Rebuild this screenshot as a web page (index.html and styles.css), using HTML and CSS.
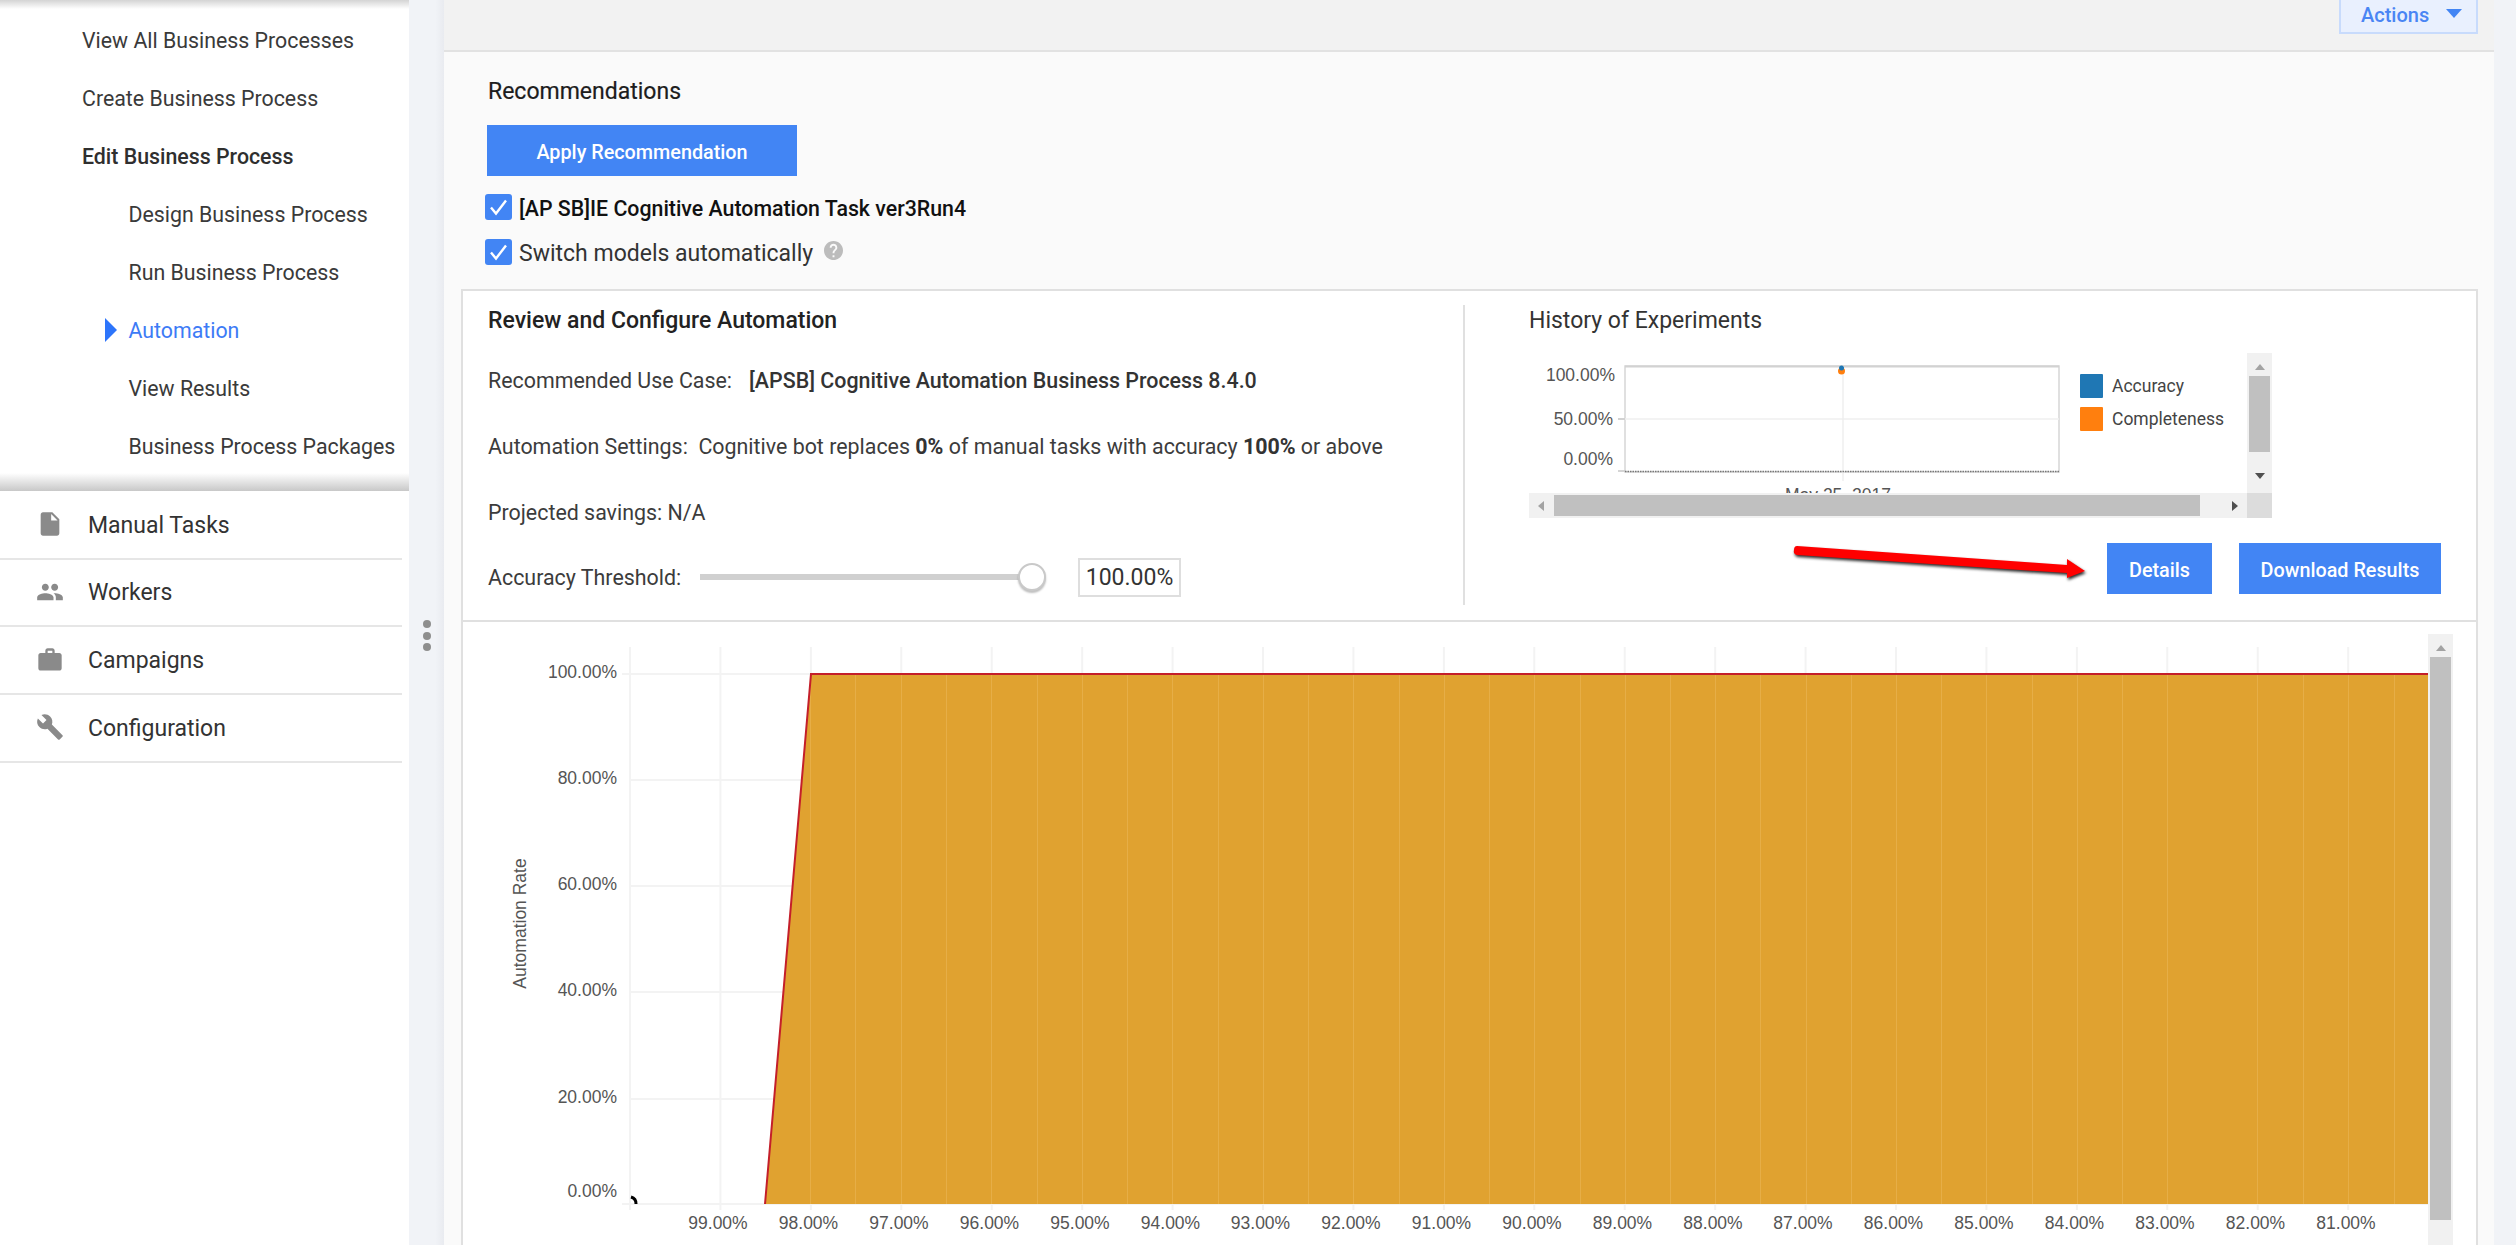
FILE: index.html
```html
<!DOCTYPE html>
<html lang="en">
<head>
<meta charset="utf-8">
<title>Automation</title>
<link rel="stylesheet" href="styles.css">
</head>
<body>
<aside class="sidebar">
  <ul class="submenu">
    <li class="sub-item">View All Business Processes</li>
    <li class="sub-item">Create Business Process</li>
    <li class="sub-item sub-current">Edit Business Process</li>
    <li class="sub-item sub-nested">Design Business Process</li>
    <li class="sub-item sub-nested">Run Business Process</li>
    <li class="sub-item sub-nested sub-active">Automation</li>
    <li class="sub-item sub-nested">View Results</li>
    <li class="sub-item sub-nested">Business Process Packages</li>
  </ul>
  <ul class="mainmenu">
    <li class="main-item"><svg class="main-icon" viewBox="0 0 24 24"><path d="M6 2c-1.1 0-1.99.9-1.99 2L4 20c0 1.1.89 2 1.99 2H18c1.1 0 2-.9 2-2V8l-6-6H6zm7 7V3.5L18.5 9H13z"/></svg>Manual Tasks</li>
    <li class="main-item"><svg class="main-icon" viewBox="0 0 24 24"><path d="M16 11c1.66 0 2.99-1.34 2.99-3S17.66 5 16 5c-1.66 0-3 1.34-3 3s1.34 3 3 3zm-8 0c1.66 0 2.99-1.34 2.99-3S9.66 5 8 5C6.34 5 5 6.34 5 8s1.34 3 3 3zm0 2c-2.33 0-7 1.17-7 3.5V19h14v-2.5c0-2.33-4.67-3.5-7-3.5zm8 0c-.29 0-.62.02-.97.05 1.16.84 1.97 1.97 1.97 3.45V19h6v-2.5c0-2.33-4.67-3.5-7-3.5z"/></svg>Workers</li>
    <li class="main-item"><svg class="main-icon" viewBox="0 0 24 24"><path d="M20 6h-4V4c0-1.11-.89-2-2-2h-4c-1.11 0-2 .89-2 2v2H4c-1.11 0-1.99.89-1.99 2L2 19c0 1.11.89 2 2 2h16c1.11 0 2-.89 2-2V8c0-1.11-.89-2-2-2zm-6 0h-4V4h4v2z"/></svg>Campaigns</li>
    <li class="main-item"><svg class="main-icon" viewBox="0 0 24 24"><path d="M22.7 19l-9.1-9.1c.9-2.3.4-5-1.5-6.9-2-2-5-2.4-7.4-1.3L9 6 6 9 1.6 4.7C.4 7.1.9 10.1 2.9 12.1c1.9 1.9 4.6 2.4 6.9 1.5l9.1 9.1c.4.4 1 .4 1.4 0l2.3-2.3c.5-.4.5-1.1.1-1.4z"/></svg>Configuration</li>
  </ul>
</aside>
<div class="gutter"><span class="dot"></span><span class="dot"></span><span class="dot"></span></div>
<main class="main">
  <header class="topbar">
    <div class="actions">Actions<span class="caret"></span></div>
  </header>
  <section class="recs">
    <h2 class="recs-title">Recommendations</h2>
    <button class="btn btn-apply">Apply Recommendation</button>
    <div class="check-row check-first">
      <span class="check"><svg viewBox="0 0 27 26"><path d="M6 13.5l5 6L21 6.5" fill="none" stroke="#fff" stroke-width="2.4"/></svg></span>
      <span class="check-label check-strong">[AP SB]IE Cognitive Automation Task ver3Run4</span>
    </div>
    <div class="check-row">
      <span class="check"><svg viewBox="0 0 27 26"><path d="M6 13.5l5 6L21 6.5" fill="none" stroke="#fff" stroke-width="2.4"/></svg></span>
      <span class="check-label">Switch models automatically</span>
      <svg class="help" viewBox="2 2 20 20"><path d="M12 2C6.48 2 2 6.48 2 12s4.48 10 10 10 10-4.48 10-10S17.52 2 12 2zm1 17h-2v-2h2v2zm2.07-7.75l-.9.92C13.45 12.9 13 13.5 13 15h-2v-.5c0-1.1.45-2.1 1.17-2.83l1.24-1.26c.37-.36.59-.86.59-1.41 0-1.1-.9-2-2-2s-2 .9-2 2H8c0-2.21 1.79-4 4-4s4 1.79 4 4c0 .88-.36 1.68-.93 2.25z"/></svg>
    </div>
  </section>
  <section class="card">
    <div class="card-top">
      <div class="review">
        <h3 class="review-title">Review and Configure Automation</h3>
        <div class="review-row">Recommended Use Case:<span class="use-case">[APSB] Cognitive Automation Business Process 8.4.0</span></div>
        <div class="review-row">Automation Settings:&nbsp; Cognitive bot replaces&nbsp;<b>0%</b>&nbsp;of manual tasks with accuracy&nbsp;<b>100%</b>&nbsp;or above</div>
        <div class="review-row">Projected savings: N/A</div>
        <div class="review-row slider-row">
          <span class="slider-label">Accuracy Threshold:</span>
          <span class="slider-track"></span>
          <span class="slider-knob"></span>
          <span class="slider-value">100.00%</span>
        </div>
      </div>
      <div class="history">
        <h3 class="history-title">History of Experiments</h3>
        <div class="history-frame">
          <svg class="history-chart" viewBox="1528 353 718 140">
            <rect x="1624" y="366" width="434" height="106" fill="#fff" stroke="#d6d6d6" stroke-width="1.5"/>
            <path d="M1624 366.500H2058" stroke="#d2d2d2" stroke-width="2"/>
            <path d="M1617 419H2058M1842 366V481" stroke="#efefef" stroke-width="1.500"/>
            <path d="M1617 419H1624M1617 471H1624" stroke="#c8c8c8" stroke-width="1.500"/>
            <path d="M1624 471.500H2058" stroke="#777" stroke-width="1.500" stroke-dasharray="1.500 1"/>
            <circle cx="1840.500" cy="371" r="3.500" fill="#ff7f0e"/>
            <circle cx="1840.500" cy="368" r="2.500" fill="#1f77b4"/>
            <text class="tick" x="1614" y="381" text-anchor="end">100.00%</text>
            <text class="tick" x="1612" y="425" text-anchor="end">50.00%</text>
            <text class="tick" x="1612" y="465" text-anchor="end">0.00%</text>
            <text class="tick" x="1837" y="501" text-anchor="middle">May 25, 2017</text>
            <rect x="2079" y="374" width="23" height="24" rx="1" fill="#1f77b4"/>
            <rect x="2079" y="407" width="23" height="24" rx="1" fill="#ff7f0e"/>
            <text class="legend" x="2111" y="392">Accuracy</text>
            <text class="legend" x="2111" y="425">Completeness</text>
          </svg>
          <div class="vbar vbar-small">
            <span class="arrow-up"></span>
            <span class="vthumb vthumb-small"></span>
            <span class="arrow-down"></span>
          </div>
          <div class="hbar">
            <span class="arrow-left"></span>
            <span class="hthumb"></span>
            <span class="arrow-right"></span>
          </div>
          <div class="corner"></div>
        </div>
        <div class="history-actions">
          <button class="btn btn-details">Details</button>
          <button class="btn btn-download">Download Results</button>
        </div>
      </div>
    </div>
    <div class="card-chart">
      <svg class="rate-chart" viewBox="463 622 1965 623">
        <path class="grid" d="M622 674H2428M630 780H2428M630 886H2428M630 992H2428M630 1099H2428M622 1204H2428"/>
        <path class="grid" d="M630 647V1210M720.400 647V1210M810.900 647V1210M901.300 647V1210M991.700 647V1210M1082.200 647V1210M1172.600 647V1210M1263 647V1210M1353.400 647V1210M1443.900 647V1210M1534.300 647V1210M1624.700 647V1210M1715.200 647V1210M1805.600 647V1210M1896 647V1210M1986.400 647V1210M2076.900 647V1210M2167.300 647V1210M2257.700 647V1210M2348.200 647V1210"/>
        <path d="M765 1204L811 674H2428V1204Z" fill="#e0a230"/>
        <path class="band" d="M810.500 675V1204M855.500 675V1204M901.500 675V1204M946.500 675V1204M991.500 675V1204M1037.500 675V1204M1082.500 675V1204M1127.500 675V1204M1172.500 675V1204M1218.500 675V1204M1263.500 675V1204M1308.500 675V1204M1353.500 675V1204M1399.500 675V1204M1444.500 675V1204M1489.500 675V1204M1534.500 675V1204M1580.500 675V1204M1625.500 675V1204M1670.500 675V1204M1715.500 675V1204M1760.500 675V1204M1806.500 675V1204M1851.500 675V1204M1896.500 675V1204M1941.500 675V1204M1986.500 675V1204M2032.500 675V1204M2077.500 675V1204M2122.500 675V1204M2167.500 675V1204M2257.500 675V1204M2303.500 675V1204M2348.500 675V1204M2394.500 675V1204"/>
        <path d="M765 1204L811 674H2428" fill="none" stroke="#c41f2a" stroke-width="2"/>
        <path d="M631 1197A7 7 0 0 1 636 1204" fill="none" stroke="#000" stroke-width="3"/>
        <text class="tick" x="617" y="678" text-anchor="end">100.00%</text>
        <text class="tick" x="617" y="784" text-anchor="end">80.00%</text>
        <text class="tick" x="617" y="890" text-anchor="end">60.00%</text>
        <text class="tick" x="617" y="996" text-anchor="end">40.00%</text>
        <text class="tick" x="617" y="1103" text-anchor="end">20.00%</text>
        <text class="tick" x="617" y="1197" text-anchor="end">0.00%</text>
        <text class="tick" x="718" y="1229" text-anchor="middle">99.00%</text>
        <text class="tick" x="808.500" y="1229" text-anchor="middle">98.00%</text>
        <text class="tick" x="899" y="1229" text-anchor="middle">97.00%</text>
        <text class="tick" x="989.500" y="1229" text-anchor="middle">96.00%</text>
        <text class="tick" x="1080" y="1229" text-anchor="middle">95.00%</text>
        <text class="tick" x="1170.500" y="1229" text-anchor="middle">94.00%</text>
        <text class="tick" x="1260.500" y="1229" text-anchor="middle">93.00%</text>
        <text class="tick" x="1351" y="1229" text-anchor="middle">92.00%</text>
        <text class="tick" x="1441.500" y="1229" text-anchor="middle">91.00%</text>
        <text class="tick" x="1532" y="1229" text-anchor="middle">90.00%</text>
        <text class="tick" x="1622.500" y="1229" text-anchor="middle">89.00%</text>
        <text class="tick" x="1713" y="1229" text-anchor="middle">88.00%</text>
        <text class="tick" x="1803" y="1229" text-anchor="middle">87.00%</text>
        <text class="tick" x="1893.500" y="1229" text-anchor="middle">86.00%</text>
        <text class="tick" x="1984" y="1229" text-anchor="middle">85.00%</text>
        <text class="tick" x="2074.500" y="1229" text-anchor="middle">84.00%</text>
        <text class="tick" x="2165" y="1229" text-anchor="middle">83.00%</text>
        <text class="tick" x="2255.500" y="1229" text-anchor="middle">82.00%</text>
        <text class="tick" x="2346" y="1229" text-anchor="middle">81.00%</text>
        <text class="tick axis-title" transform="translate(526 923.500) rotate(-90)" text-anchor="middle">Automation Rate</text>
      </svg>
      <div class="vbar vbar-large">
        <span class="arrow-up"></span>
        <span class="vthumb vthumb-large"></span>
      </div>
    </div>
  </section>
</main>
<div class="edge"></div>
<svg class="callout" viewBox="1785 540 310 50">
  <path d="M1797 546L2067 565V559L2085 571L2067 578V573L1797 555Q1793 554 1794 550Q1794 546 1797 546Z" fill="#f00"/>
</svg>
</body>
</html>
```
FILE: styles.css
```css
* { box-sizing: border-box; }
html, body { margin: 0; height: 100%; }
body {
  position: relative;
  display: flex;
  height: 1245px;
  overflow: hidden;
  background: #f1f3f7;
  color: #333;
  font-family: Roboto, "Liberation Sans", sans-serif;
}
ul { list-style: none; margin: 0; padding: 0; }
h2, h3 { margin: 0; font-weight: 500; }

.sidebar { width: 409px; flex: none; height: 100%; background: #fff; }
.submenu {
  padding: 11px 0 16px;
  background:
    linear-gradient(#d4d4d4, rgba(255,255,255,0)) top / 100% 9px no-repeat,
    linear-gradient(rgba(255,255,255,0), #c8c8c8) bottom / 100% 18px no-repeat;
}
.sub-item {
  position: relative;
  height: 58px;
  padding: 1px 0 0 82px;
  font-size: 21.330px;
  line-height: 58px;
  color: #3a3a3a;
  white-space: nowrap;
}
.sub-current { font-weight: 500; color: #2f2f2f; }
.sub-nested { padding-left: 128.500px; }
.sub-active { color: #3d7bf6; }
.sub-active::before {
  content: "";
  position: absolute;
  left: 105px;
  top: 17px;
  border-left: 12px solid #2d75fb;
  border-top: 12px solid transparent;
  border-bottom: 12px solid transparent;
}
.mainmenu { width: 402px; padding-top: 1px; }
.main-item {
  display: flex;
  align-items: center;
  height: 67.67px;
  padding: 1px 0 0 36px;
  border-bottom: 2px solid #e6e6e6;
  font-size: 23px;
  color: #333;
}
.main-icon { width: 28px; height: 28px; margin: -2px 24px 0 0; fill: #8a8a8a; }

.gutter {
  width: 35px;
  flex: none;
  display: flex;
  flex-direction: column;
  align-items: center;
  gap: 3.500px;
  padding-top: 620px;
  background: linear-gradient(90deg, #f1f3f7 75%, #e9ebf0);
}
.dot { width: 8px; height: 8px; border-radius: 50%; background: #8e8e8e; }

.main { width: 2050px; flex: none; height: 100%; background: #fafafa; }
.edge { flex: 1; }
.topbar {
  display: flex;
  justify-content: flex-end;
  height: 52px;
  padding-right: 16px;
  background: #f2f2f2;
  border-bottom: 2px solid #e2e2e2;
}
.actions {
  display: flex;
  align-items: center;
  width: 139px;
  height: 34px;
  padding: 0 0 2px 20px;
  background: #e9f0fe;
  border: 2px solid #c8dbfc;
  border-top: 0;
  color: #4a85f4;
  font-size: 20px;
  font-weight: 500;
}
.caret {
  margin: -3px 0 0 17px;
  border-top: 9px solid #4285f4;
  border-left: 8px solid transparent;
  border-right: 8px solid transparent;
}

.recs { padding: 24px 0 0 41px; }
.recs-title { margin-left: 3px; padding-top: 1px; height: 30px; font-size: 23px; line-height: 30px; font-weight: 400; color: #1d1d1d; -webkit-text-stroke: .2px #1d1d1d; }
.btn {
  display: block;
  height: 51px;
  padding: 4px 0 0;
  border: 0;
  background: #4285f4;
  color: #fff;
  font-family: inherit;
  font-size: 19.800px;
  font-weight: 500;
}
.btn-apply { width: 310px; margin: 19px 0 0 2px; }
.check-row { display: flex; align-items: center; height: 27px; margin-top: 18px; }
.check-first { height: 26px; }
.check { width: 27px; height: 26px; flex: none; border-radius: 3px; background: #4285f4; }
.check svg { display: block; width: 27px; height: 26px; }
.check-label { margin-left: 7px; padding-top: 3px; font-size: 23px; color: #333; }
.check-strong { font-size: 21.330px; font-weight: 500; color: #111; }
.help { width: 19px; height: 19px; margin: -2px 0 0 11px; fill: #bcbcbc; }

.card {
  margin: 24px 16px 0 17px;
  height: 1000px;
  background: #fff;
  border: 2px solid #e0e0e0;
  border-bottom: 0;
}
.card-top {
  display: flex;
  height: 331px;
  padding-top: 14px;
  border-bottom: 2px solid #e0e0e0;
}
.review { width: 1002px; height: 300px; padding-left: 25px; border-right: 2px solid #e0e0e0; }
.review-title { height: 30px; padding-top: 1px; font-size: 23px; line-height: 30px; margin-bottom: 12px; color: #222; }
.review-row { display: flex; align-items: center; height: 66px; font-size: 21.400px; color: #3c3c3c; white-space: nowrap; }
.review-row b { font-weight: 700; color: #333; }
.use-case { margin-left: 17px; font-weight: 500; color: #333; }
.slider-row { height: 60px; padding-top: 4px; }
.slider-label { width: 212px; flex: none; }
.slider-track { width: 320px; height: 6px; background: #d0d0d0; }
.slider-knob {
  width: 28px;
  height: 28px;
  margin-left: -2px;
  border-radius: 50%;
  background: #fff;
  border: 2px solid #c9c9c9;
  box-shadow: 0 2px 2px rgba(0,0,0,.25);
}
.slider-value {
  width: 103px;
  height: 39px;
  margin-left: 32px;
  border: 2px solid #dedede;
  font-size: 23px;
  line-height: 35px;
  text-align: center;
  color: #333;
}

.history { flex: 1; padding: 0 35px 0 64px; }
.history-title { height: 30px; padding-top: 1px; font-size: 23px; line-height: 30px; font-weight: 400; color: #333; }
.history-frame {
  display: grid;
  grid-template-columns: 718px 25px;
  grid-template-rows: 140px 25px;
  width: 743px;
  margin-top: 18px;
}
.history-chart { display: block; width: 718px; height: 140px; }
.tick { font-family: "Liberation Sans", Arial, sans-serif; font-size: 17.500px; fill: #555; }
.legend { font-family: Roboto, sans-serif; font-size: 17.500px; fill: #444; }
.vbar { display: flex; flex-direction: column; align-items: center; background: #f1f1f1; }
.vbar-large { width: 25px; flex: none; margin-top: 12px; height: 611px; }
.vthumb { display: block; width: 21px; background: #c0c0c0; }
.vthumb-small { height: 76px; margin-top: 6px; }
.vthumb-large { height: 563px; margin-top: 6px; }
.arrow-up {
  margin-top: 11px;
  border-bottom: 6px solid #a3a3a3;
  border-left: 5.500px solid transparent;
  border-right: 5.500px solid transparent;
}
.arrow-down {
  margin-top: 21px;
  border-top: 6px solid #505050;
  border-left: 5.500px solid transparent;
  border-right: 5.500px solid transparent;
}
.hbar { display: flex; align-items: center; background: #f1f1f1; padding-left: 9px; }
.hthumb { width: 646px; height: 21px; margin-left: 10px; background: #c0c0c0; }
.arrow-left {
  border-right: 6px solid #a3a3a3;
  border-top: 5.500px solid transparent;
  border-bottom: 5.500px solid transparent;
}
.arrow-right {
  margin-left: 32px;
  border-left: 6px solid #505050;
  border-top: 5.500px solid transparent;
  border-bottom: 5.500px solid transparent;
}
.corner { background: #dcdcdc; }
.history-actions { display: flex; justify-content: flex-end; gap: 27px; margin-top: 25px; }
.btn-details { width: 105px; }
.btn-download { width: 202px; }

.card-chart { display: flex; align-items: flex-start; }
.rate-chart { display: block; width: 1965px; height: 623px; flex: none; }
.grid { fill: none; stroke: #f3f3f3; stroke-width: 2; }
.band { fill: none; stroke: #e6ae47; stroke-width: 1; shape-rendering: crispEdges; }
.axis-title { fill: #555; }

.callout {
  position: absolute;
  left: 1785px;
  top: 540px;
  width: 310px;
  height: 50px;
  filter: drop-shadow(1px 2px 1.500px rgba(0,0,0,.85));
}
```
